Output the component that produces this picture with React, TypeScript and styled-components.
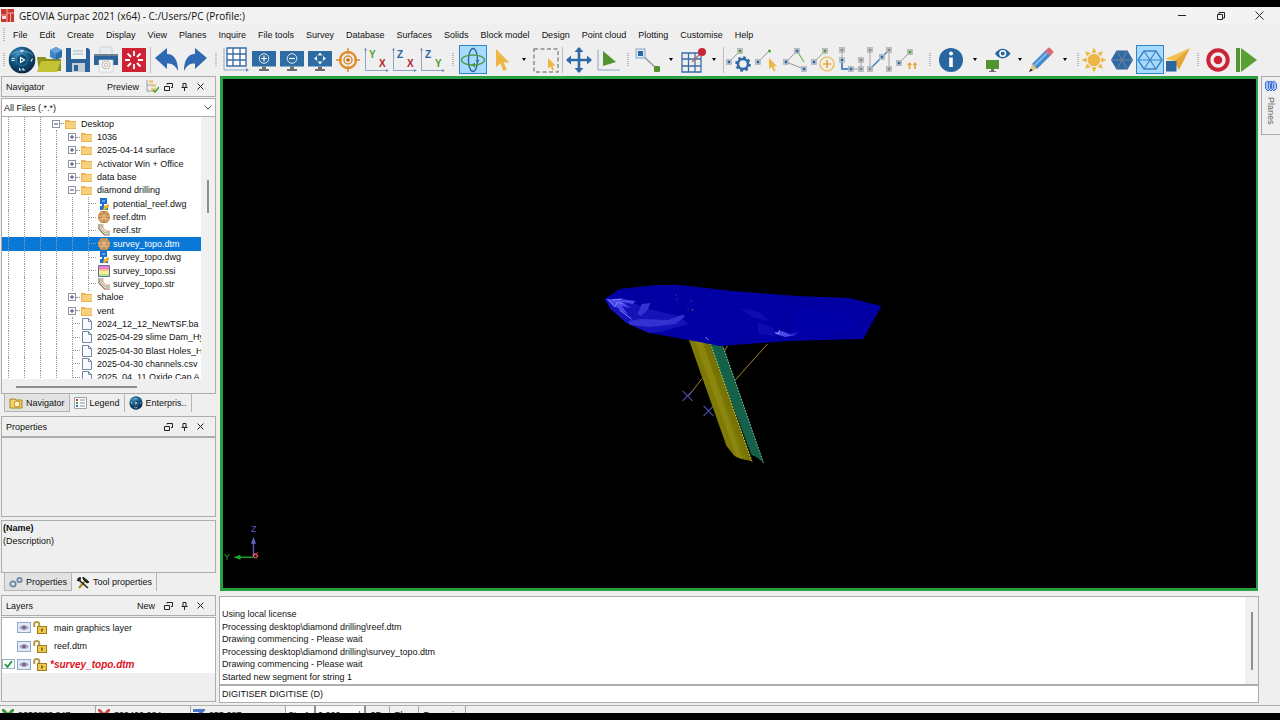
import React from "react";
import styled, { createGlobalStyle, css } from "styled-components";

const sans = `"Liberation Sans", Arial, sans-serif`;

const GlobalStyle = createGlobalStyle`
  *, *::before, *::after { box-sizing: border-box; }
  body { margin: 0; background: #000; font-family: ${sans}; font-size: 9px; color: #111; }
  button, input, select { font: inherit; color: inherit; margin: 0; padding: 0; border: 0; background: none; border-radius: 0; }
  ul { list-style: none; margin: 0; padding: 0; }
  svg { display: block; flex: none; }
`;

const Screen = styled.div`
  height: 100vh;
  padding: 7px 0;
  background: #000;
`;

const Window = styled.div`
  height: 100%;
  display: flex;
  flex-direction: column;
  background: #efefef;
  overflow: hidden;
`;

/* Title bar */
const TitleBar = styled.header`
  flex: none;
  height: 17px;
  display: flex;
  align-items: center;
  gap: 5px;
  padding-left: 1px;
  background: #f3f3f3;
`;
const Title = styled.h1`
  margin: 0;
  flex: 1;
  font: 400 10px "Open Sans", "Noto Sans", sans-serif;
`;
const WindowButton = styled.button`
  width: 39px;
  height: 17px;
  display: flex;
  align-items: center;
  justify-content: center;
`;
const WindowButtons = styled.div`
  display: flex;
  padding-right: 1px;
`;

/* Menu bar */
const MenuBar = styled.nav`
  flex: none;
  height: 21px;
  display: flex;
  align-items: center;
  gap: 12px;
  padding-left: 3px;
`;
const MenuItem = styled.button`
  white-space: nowrap;
`;
const Dots = styled.span`
  width: 2px;
  height: 13px;
  background: repeating-linear-gradient(#b9b9b9 0 1px, #efefef 1px 2px);
`;
const MenuGrip = styled(Dots)`
  margin-right: -4px;
`;

/* Toolbar */
const Toolbar = styled.div`
  flex: none;
  height: 31px;
  display: flex;
  align-items: flex-start;
`;
const Tool = styled.button<{ $active?: boolean }>`
  width: 28px;
  height: 29px;
  flex: none;
  display: flex;
  align-items: center;
  justify-content: center;
  ${(p) => p.$active && css`background: #a6dbff; box-shadow: inset 0 0 0 1px #2f86cc;`}
`;
const Grip = styled.span<{ $w: number }>`
  flex: none;
  width: ${(p) => p.$w}px;
  height: 29px;
  display: flex;
  align-items: center;
  justify-content: center;
`;
const Rule = styled.span`
  flex: none;
  width: 1px;
  height: 26px;
  margin: 2px;
  background: #bdbdbd;
`;
const Caret = styled.button<{ $w: number }>`
  flex: none;
  width: ${(p) => p.$w}px;
  height: 29px;
  display: flex;
  align-items: center;
  justify-content: center;
  &::after {
    content: "";
    border: 2px solid transparent;
    border-top: 3px solid #000;
    border-bottom: 0;
  }
`;

/* Main regions */
const Main = styled.main`
  flex: 1;
  min-height: 0;
  display: flex;
`;
const Side = styled.aside`
  flex: none;
  width: 216px;
  padding-left: 1px;
  display: flex;
  flex-direction: column;
`;
const Center = styled.section`
  flex: 1;
  min-width: 0;
  margin-left: 4px;
  display: flex;
  flex-direction: column;
`;
const Viewport = styled.div`
  flex: 1;
  min-height: 0;
  border: 3px solid #2aa043;
  border-width: 3px 2px 3px 3px;
  background: #000;
`;
const Strip = styled.aside`
  flex: none;
  width: 22px;
  padding-left: 3px;
`;
const PlanesTab = styled.button`
  width: 19px;
  height: 59px;
  border: 1px solid #a9a9a9;
  border-right: 0;
  display: flex;
  flex-direction: column;
  align-items: center;
  padding-top: 3px;
  gap: 5px;
  color: #666;
`;
const Vertical = styled.span`
  writing-mode: vertical-rl;
`;

/* Docked panels */
const PanelHead = styled.div`
  flex: none;
  height: 21px;
  display: flex;
  align-items: center;
  border: 1px solid #adadad;
  padding: 0 7px 0 4px;
`;
const PanelTitle = styled.h2`
  margin: 0;
  flex: 1;
  font-size: 9px;
  font-weight: 400;
`;
const HeadText = styled.button`
  margin-right: 5px;
`;
const HeadButton = styled.button`
  width: 16px;
  height: 16px;
  display: flex;
  align-items: center;
  justify-content: center;
`;
const ComboWrap = styled.div`
  flex: none;
  height: 19px;
  margin-top: 1px;
  display: flex;
  align-items: center;
  border: 1px solid #adadad;
  background: #fff;
  padding-right: 3px;
`;
const Combo = styled.select`
  appearance: none;
  flex: 1;
  padding-left: 2px;
  outline: 0;
`;
const Browser = styled.div`
  flex: none;
  height: 277px;
  border: 1px solid #adadad;
  border-top: 0;
  display: grid;
  grid-template-columns: 1fr 14px;
  grid-template-rows: 1fr 14px;
`;
const TreeClip = styled.div`
  min-width: 0;
  background: #fff;
  overflow: hidden;
`;
const Tree = styled.ul`
  height: 267px;
  display: grid;
  grid-auto-rows: 1fr;
`;
const TreeRow = styled.li<{ $on?: boolean }>`
  display: flex;
  align-items: stretch;
  min-height: 0;
  white-space: nowrap;
  ${(p) => p.$on && css`background: #0a78d7; color: #fff;`}
  & > :first-child { margin-left: 6px; }
`;
const Guide = styled.span`
  flex: none;
  width: 8px;
  margin-left: 8px;
  border-left: 1px dotted #999;
`;
const Elbow = styled(Guide)`
  display: flex;
  align-items: center;
  &::after { content: ""; flex: 1; border-top: 1px dotted #999; }
`;
const Knot = styled.span`
  flex: none;
  width: 12px;
  margin-left: 4px;
  display: flex;
  align-items: center;
  &::after { content: ""; flex: 1; border-top: 1px dotted #999; }
`;
const RowIcon = styled.span<{ $file?: boolean }>`
  flex: none;
  width: 17px;
  display: flex;
  align-items: center;
  padding-left: ${(p) => (p.$file ? 2 : 1)}px;
`;
const RowLabel = styled.span`
  align-self: center;
  line-height: 12px;
`;
const ScrollV = styled.div`
  display: flex;
  justify-content: center;
  background: #f0f0f0;
`;
const ThumbV = styled.span<{ $top: number; $len: number }>`
  width: 2px;
  height: ${(p) => p.$len}px;
  margin-top: ${(p) => p.$top}px;
  background: #8f8f8f;
`;
const ScrollH = styled.div`
  grid-column: 1 / -1;
  padding: 7px 0 0 14px;
`;
const ThumbH = styled.span`
  display: block;
  width: 121px;
  height: 2px;
  background: #8f8f8f;
`;
const Tabs = styled.div`
  flex: none;
  height: 18px;
  margin: 0 0 4px 3px;
  display: flex;
`;
const Tab = styled.button<{ $on?: boolean }>`
  display: flex;
  align-items: center;
  gap: 3px;
  padding: 0 4px 0 4px;
  white-space: nowrap;
  border-right: 1px solid #b5b5b5;
  ${(p) => p.$on && css`background: #e2e2e2; border: 1px solid #b5b5b5; border-top: 0;`}
`;
const Blank = styled.div`
  flex: none;
  height: 80px;
  margin-bottom: 3px;
  border: 1px solid #adadad;
`;
const Detail = styled.dl`
  flex: none;
  height: 53px;
  margin: 0;
  padding-top: 1px;
  border: 1px solid #adadad;
  line-height: 13px;
  dt { font-weight: 700; padding-left: 1px; }
  dd { margin: 0; padding-left: 1px; }
`;
const LayerBox = styled.div`
  flex: 1;
  min-height: 0;
  margin: 1px 0 3px;
  border: 1px solid #adadad;
`;
const LayerList = styled.ul`
  background: #fff;
`;
const LayerRow = styled.li<{ $on?: boolean }>`
  height: 18px;
  display: flex;
  align-items: center;
  gap: 2px;
  &:first-child { height: 19px; }
  ${(p) => p.$on && css`color: #e0101a; font-weight: 700; font-style: italic;`}
`;
const LayerCheck = styled.input`
  appearance: none;
  width: 13px;
  height: 10px;
  &:checked { border: 1px solid #9db4c8; background: #fff; }
`;
const LayerTick = styled.label`
  display: grid;
  & > * { grid-area: 1 / 1; align-self: center; justify-self: center; }
`;
const IconButton = styled.button`
  display: flex;
`;
const LayerName = styled.span<{ $on?: boolean }>`
  padding-left: ${(p) => (p.$on ? 1 : 5)}px;
  font-size: ${(p) => (p.$on ? 10 : 9)}px;
`;

/* Message window */
const Console = styled.div`
  flex: none;
  height: 107px;
  margin: 5px -1px 2px -1px;
  border: 1px solid #adadad;
  background: #fff;
  display: flex;
  flex-direction: column;
`;
const LogArea = styled.div`
  flex: 1;
  display: flex;
  border-bottom: 2px solid #adadad;
`;
const Log = styled.ul`
  flex: 1;
  height: 75px;
  margin-top: 11px;
  padding-left: 2px;
  display: grid;
  grid-auto-rows: 1fr;
  align-items: center;
`;
const LogScroll = styled(ScrollV)`
  width: 13px;
`;
const Prompt = styled.input`
  height: 16px;
  padding-left: 2px;
  outline: 0;
`;

/* Status bar */
const StatusBar = styled.footer`
  flex: none;
  height: 8px;
  overflow: hidden;
  display: flex;
  align-items: flex-start;
  border-top: 1px solid #adadad;
`;
const StatusCell = styled.span<{ $w: number; $sunk?: boolean }>`
  flex: none;
  width: ${(p) => p.$w}px;
  height: 18px;
  display: flex;
  align-items: center;
  gap: 4px;
  padding-left: 2px;
  white-space: nowrap;
  border-right: 1px solid #a5a5a5;
  ${(p) => p.$sunk && css`border-right: 2px solid #8a8a8a; background: #fafafa;`}
`;

/* ---------- icons ---------- */
const I = ({ children, s = 28 }: { children: React.ReactNode; s?: number }) => (
  <svg width={s} height={s} viewBox="0 0 28 28" fill="none" aria-hidden="true">{children}</svg>
);
const Node = ({ x, y, c = "#2e6ba6" }: { x: number; y: number; c?: string }) => (
  <g><rect x={x - 2.5} y={y - 2.5} width="5" height="5" fill="#c4ccd3" stroke="#a3a9ae" strokeWidth=".6" /><rect x={x - 1.3} y={y - 1.3} width="2.6" height="2.6" fill={c} /></g>
);
const Monitor = ({ children }: { children: React.ReactNode }) => (
  <I><rect x="2" y="5" width="24" height="15.5" fill="#2e6ca4" /><path d="M12 20.5h4v2.5h3v2H9v-2h3z" fill="#6b6f73" />{children}</I>
);
const Axes = ({ a, ac, b, bc }: { a: string; ac: string; b: string; bc: string }) => (
  <I>
    <path d="M3.5 3v21.500H25" stroke="#8ea6c4" strokeWidth="1" /><path d="M2 4.500l1.500-3L5 4.500zM24 23l3 1.500-3 1.500z" fill="#7090bb" />
    <text x="7" y="12" fontSize="10" fontWeight="700" fill={ac} fontFamily="Liberation Sans">{a}</text>
    <text x="17" y="21" fontSize="10" fontWeight="700" fill={bc} fontFamily="Liberation Sans">{b}</text>
  </I>
);
const Globe = ({ s = 28 }: { s?: number }) => (
  <I s={s}>
    <defs><radialGradient id="gl" cx=".4" cy=".3" r=".7"><stop offset="0" stopColor="#4d9ccc" /><stop offset=".5" stopColor="#12557f" /><stop offset="1" stopColor="#082744" /></radialGradient></defs>
    <circle cx="14" cy="14" r="13.3" fill="url(#gl)" />
    <path d="M3 9c5-5 17-5 22 0" stroke="#8cc8e8" strokeWidth="1" opacity=".6" />
    <circle cx="14" cy="14" r="5.500" fill="#0d4770" stroke="#2c7cae" strokeWidth=".8" />
    <path d="M12.500 11.500l4 2.500-4 2.500z" stroke="#fff" strokeWidth="1.200" />
    <path d="M3.500 12.500h3M3.500 14.500h3M23 15.500l1.500-3M12.500 4l1.500 1.500L15.500 4M11.500 22v2h2M15 22v2h2" stroke="#e4f2fa" strokeWidth="1.100" />
  </I>
);
const Cursor = "M0 0v17l4-3.600 3 7 3-1.300-3-6.600h5.500z";
const Hex = "M8 5h12l6 9-6 9H8L2 14z";
const cross = "M8 5l12 18M20 5L8 23M2 14h24";

const icons: Record<string, React.ReactNode> = {
  sphere: <Globe />,
  open: <I><path d="M1 11h8l2 2h14v12H3z" fill="#8f8f1d" /><path d="M5 15h20l-4 11H1z" fill="#c3c234" /><path d="M20 1l6 3v7l-6 3-6-3V4z" fill="#3f86c4" /><path d="M20 7.500v6.500l6-3V4z" fill="#2f6da7" /><path d="M14 4l6 3.500L26 4l-6-3z" fill="#66a4d8" /></I>,
  save: <I><path d="M2 2h22l2 2v22H2z" fill="#2b6399" /><path d="M7 2h15v11H7z" fill="#f1f4f6" /><path d="M9 5h10M9 8h10" stroke="#a8b1b8" /><path d="M8 17h13v9H8z" fill="#c5cdd4" /><path d="M10 19h4v6h-4z" fill="#2b6399" /></I>,
  print: <I><path d="M8 1h12v8H8z" fill="#e9edf0" stroke="#c0c6ca" strokeWidth=".7" /><path d="M2 8h24v11H2z" fill="#2b6399" /><path d="M2 8h24v2H2z" fill="#6f8191" /><path d="M7 14h14v12H7z" fill="#f4f5f5" stroke="#c9cdd0" strokeWidth=".7" /><circle cx="14" cy="19" r="4" stroke="#c2bbae" /><circle cx="14" cy="19" r="1.700" stroke="#cbb" /></I>,
  burst: <I><rect x="2" y="2" width="24" height="24" fill="#cf2134" /><path d="M14 5v5M14 18v5M5 14h5M18 14h5M7.500 7.500l3.500 3.500M17 17l3.500 3.500M20.500 7.500L17 11M11 17l-3.500 3.500" stroke="#fff" strokeWidth="1.800" /></I>,
  undo: <I><path d="M2 12L14 2v6c7 0 11 6 11 17-3-6-6-7.500-11-7.500V23z" fill="#2f69b1" /></I>,
  redo: <I><path d="M26 12L14 2v6C7 8 3 14 3 25c3-6 6-7.500 11-7.500V23z" fill="#2f69b1" /></I>,
  grid: <I><path d="M5 2h19v18H5zM11 2v18M18 2v18M5 8h19M5 14h19" stroke="#3a6ea5" strokeWidth="1.400" fill="#fff" /><path d="M2 2v22h23" stroke="#8ea6c4" /><path d="M24 22l3 2-3 2z" fill="#7090bb" /></I>,
  zoomIn: <Monitor><circle cx="14" cy="12.500" r="4.800" stroke="#dce9f4" /><path d="M11 12.500h6M14 9.500v6" stroke="#fff" strokeWidth="1.200" /></Monitor>,
  zoomOut: <Monitor><circle cx="14" cy="12.500" r="4.800" stroke="#dce9f4" /><path d="M11 12.500h6" stroke="#fff" strokeWidth="1.200" /></Monitor>,
  zoomAll: <Monitor><path d="M14 6.500l2.500 3h-5zM14 18.500l2.500-3h-5zM8 12.500l3-2.500v5zM20 12.500l-3-2.500v5z" fill="#e6f0f8" /></Monitor>,
  target: <I><circle cx="14" cy="14" r="8" stroke="#de8c2b" strokeWidth="2.300" /><circle cx="14" cy="14" r="4" stroke="#de8c2b" strokeWidth="1.500" /><circle cx="14" cy="14" r="1.800" fill="#c56c12" /><path d="M14 2v6M14 20v6M2 14h6M20 14h6" stroke="#de8c2b" strokeWidth="1.500" /></I>,
  yx: <Axes a="Y" ac="#4f9b2c" b="X" bc="#b6242c" />,
  zx: <Axes a="Z" ac="#2e64a4" b="X" bc="#b6242c" />,
  zy: <Axes a="Z" ac="#2e64a4" b="Y" bc="#4f9b2c" />,
  rotate: <I><ellipse cx="14" cy="14" rx="4.500" ry="11.500" stroke="#36679f" strokeWidth="1.400" /><ellipse cx="14" cy="14" rx="11.500" ry="5" stroke="#519a45" strokeWidth="1.400" /><path d="M16.500 14h4l-2 3z" fill="#36679f" /><path d="M16 16.500v5l-4-2.500z" fill="#519a45" /></I>,
  cursor: <I><path transform="translate(9 3) scale(1.080)" d={Cursor} fill="#eeb644" /></I>,
  select: <I><rect x="2" y="3" width="24" height="23" stroke="#8d8d8d" strokeWidth="1.500" strokeDasharray="4 2.500" /><path transform="translate(16 12) scale(.62)" d={Cursor} fill="#eeb644" /></I>,
  move: <I><path d="M14 2v24M2 14h24" stroke="#2e69a6" strokeWidth="2.600" /><path d="M14 1l4.500 5h-9zM14 27l4.500-5h-9zM1 14l5-4.500v9zM27 14l-5-4.500v9z" fill="#2e69a6" /></I>,
  tri: <I><path d="M5 4v20h22" stroke="#8ea6c4" /><path d="M10 5l13 11-13 4z" fill="#529430" /></I>,
  line: <I><path d="M7 8l15 14" stroke="#999" strokeWidth="1.500" /><rect x="2" y="3" width="9" height="9" fill="#dce8f2" stroke="#87a6c2" /><rect x="4" y="5" width="5" height="5" fill="#2e69a6" /><rect x="20" y="20" width="6" height="6" rx="1" fill="#529430" /></I>,
  gridpin: <I><path d="M3 7h19v19H3zM9.500 7v19M16 7v19M3 13h19M3 20h19" stroke="#3a6ea5" strokeWidth="1.300" /><path d="M13 16l8-8" stroke="#c4606a" strokeWidth="1.500" /><circle cx="23" cy="6" r="4" fill="#cb2437" /></I>,
  nGear: <I><path d="M3 16L14 5" stroke="#999" /><Node x={3} y={16} /><Node x={14} y={5} c="#529430" /><circle cx="17" cy="18" r="5" stroke="#2e69a6" strokeWidth="2.500" /><circle cx="17" cy="18" r="6.800" stroke="#2e69a6" strokeWidth="2" strokeDasharray="2.670 2.670" /></I>,
  nCursor: <I><path d="M4 16L15 5" stroke="#999" /><Node x={4} y={16} /><circle cx="15.500" cy="5" r="1.500" fill="#49a32f" /><path transform="translate(15 12) scale(.65)" d={Cursor} fill="#eeb644" /></I>,
  nTri: <I><path d="M22 23L4 16 15 5" stroke="#999" /><path d="M15 5l7 11" stroke="#71b35d" strokeWidth="1.200" /><Node x={4} y={16} /><Node x={15} y={5} /><Node x={22} y={23} /></I>,
  nPlus: <I><path d="M4 16L15 5" stroke="#999" /><Node x={4} y={16} /><Node x={15} y={5} c="#529430" /><circle cx="17" cy="18" r="7" stroke="#eeb644" strokeWidth="1.200" /><path d="M13 18h8M17 14v8" stroke="#e9a92c" strokeWidth="1.600" /></I>,
  nU: <I><path d="M4 4v19h19V14" stroke="#a3a3a3" /><path d="M4 13v10h9" stroke="#2e75bb" strokeWidth="1.500" /><Node x={4} y={4} c="#888" /><Node x={4} y={14} /><Node x={13} y={23} /><Node x={23} y={14} c="#888" /><Node x={23} y={23} c="#888" /></I>,
  nN: <I><path d="M4 4v19M23 4v19" stroke="#a3a3a3" /><path d="M4 23L23 4" stroke="#2e75bb" strokeWidth="1.300" /><Node x={4} y={4} c="#888" /><Node x={4} y={23} c="#888" /><Node x={16} y={11} /><Node x={23} y={4} c="#888" /><Node x={23} y={23} c="#888" /></I>,
  nUp: <I><path d="M5 17L16 6" stroke="#999" /><Node x={5} y={17} /><Node x={16} y={6} c="#529430" /><path d="M15.500 23v-5M21 23v-5" stroke="#e9a92c" strokeWidth="1.700" /><path d="M13 19l2.500-3 2.500 3zM18.500 19l2.500-3 2.500 3z" fill="#e9a92c" /></I>,
  info: <I><circle cx="14" cy="14" r="12" fill="#2b679f" /><circle cx="14" cy="7.500" r="2" fill="#fff" /><path d="M12.200 11.500h3.600V21h-3.600z" fill="#fff" /></I>,
  eye: <I><rect x="1" y="14" width="13" height="9" fill="#529430" /><path d="M6 23h3v2h2v1H4v-1h2z" fill="#6a7070" /><path d="M10 7.500c4-6.500 11-6.500 15.500 0-4.500 6.500-11.500 6.500-15.500 0z" fill="#2b679f" /><circle cx="17.700" cy="7.500" r="3.500" fill="#fff" /><circle cx="17.700" cy="7.500" r="2" fill="#2b679f" /></I>,
  pencil: <I><path d="M5 18L19 4l5 5L10 23z" fill="#4389cf" /><path d="M7 20L21 6" stroke="#86b8e6" strokeWidth="2" /><path d="M18 5l3-3q1-1 2 0l3 3q1 1 0 2l-3 3z" fill="#dc6a74" /><path d="M5 18l5 5-7 2.500z" fill="#e8c27c" /><path d="M3.700 22.500l2 2L2 26z" fill="#222" /></I>,
  sun: <I><path d="M14 1.500l2.500 5.200h-5zM14 26.500l2.500-5.200h-5zM1.500 14l5.200-2.500v5zM26.500 14l-5.200-2.500v5zM5.200 5.200l5.300 1.900-3.400 3.400zM22.800 22.800l-5.300-1.900 3.400-3.400zM22.800 5.200l-1.900 5.300-3.400-3.400zM5.200 22.800l1.900-5.300 3.400 3.400z" fill="#eeb644" /><circle cx="14" cy="14" r="7.200" fill="#efefef" /><circle cx="14" cy="14" r="6.300" fill="#eeb644" /></I>,
  hex: <I><path d="M8.500 4.500h11L25 14l-5.500 9.500h-11L3 14z" fill="#2e69a6" /><path d="M8.500 4.500l11 19M19.500 4.500l-11 19M3 14h22" stroke="#76889b" strokeWidth="1" /></I>,
  hexLine: <I><path d={Hex} stroke="#3d83bd" strokeWidth="1.400" /><path d={cross} stroke="#3d83bd" strokeWidth="1.200" /></I>,
  plane: <I><path d="M26 2L1 13l9 2z" fill="#f2c04c" /><path d="M26 2L10 15l5 9z" fill="#e5a632" /><rect x="2" y="15" width="10.500" height="10.500" fill="#2b679f" /></I>,
  stop: <I><circle cx="14" cy="14" r="9.700" stroke="#cb2437" strokeWidth="4" /><circle cx="14" cy="14" r="4.300" fill="#cb2437" /></I>,
  play: <I><path d="M4 2h4v24H4z" fill="#529430" /><path d="M9 2l16 12L9 26z" fill="#5a9e36" /></I>,
};

const FolderIcon = () => <svg width="11" height="10" viewBox="0 0 11 10"><path d="M0 1h4l1 1h6v8H0z" fill="#e9b451" /><path d="M1 3h10v6H1z" fill="#f8cf7c" /></svg>;
const Box = ({ plus }: { plus?: boolean }) => (
  <svg width="8" height="8" viewBox="0 0 8 8" fill="none"><rect x=".5" y=".5" width="7" height="7" fill="#fff" stroke="#8d93a0" /><path d={plus ? "M2 4h4M4 2v4" : "M2 4h4"} stroke="#3c466b" /></svg>
);
const fileIcons: Record<string, React.ReactNode> = {
  dwg: <svg width="12" height="12" viewBox="0 0 12 12"><path d="M2 0h7v6H6v2h4v4H2V8h2V6H2z" fill="#1f6fd2" /><path d="M6 8l5-2v3l-4 3H5z" fill="#e8b620" /><path d="M4 2h3v2H4z" fill="#5fa2ee" /></svg>,
  dtm: <svg width="12" height="12" viewBox="0 0 12 12" fill="none"><path d="M3 0h6l3 4v4l-3 4H3L0 8V4z" fill="#c48a4c" /><path d="M3 1l3 4 3-4M0 5l6 0 6 0M3 11l3-6 3 6M1 8h10" stroke="#edcb9c" strokeWidth=".8" /></svg>,
  str: <svg width="12" height="12" viewBox="0 0 12 12" fill="none"><path d="M1 0v5l5.500 6H12" stroke="#9a6b4d" strokeWidth="1.200" /><path d="M3 0v4.500L7.300 9H12" stroke="#5da05a" /><path d="M4.800 0v4L8 7.200h4" stroke="#d9806b" /></svg>,
  ssi: <svg width="12" height="12" viewBox="0 0 12 12"><path d="M.5.500h11v11H.5z" fill="#f7ef8f" stroke="#5c6f96" /><path d="M1 1h10v3H1z" fill="#ee7fcb" /><path d="M1 4h10v2H1z" fill="#f9b98a" /><path d="M1 9h10v2H1z" fill="#b4e58e" /></svg>,
  doc: <svg width="10" height="12" viewBox="0 0 10 12"><path d="M.5.500h6l3 3v8h-9z" fill="#f8fbff" stroke="#7587a3" /><path d="M6.500.500v3h3" fill="none" stroke="#7587a3" /></svg>,
};

const Eye = () => <svg width="14" height="11" viewBox="0 0 14 11"><rect x=".5" y=".5" width="13" height="10" fill="#e3eaf5" stroke="#93a8c8" /><path d="M2 5.500q5-5 10 0-5 5-10 0z" fill="#9aa5d0" /><circle cx="7" cy="5.500" r="1.800" fill="#8a5a78" /></svg>;
const Lock = () => <svg width="14" height="13" viewBox="0 0 14 13" fill="none"><path d="M1.200 6V3q0-2 2.500-2t2.500 2v3" stroke="#b9974a" strokeWidth="2" /><rect x="4.500" y="5.500" width="9" height="7" fill="#efc84d" stroke="#9f7b22" /><path d="M9 7.500v3" stroke="#5b4510" strokeWidth="1.400" /></svg>;
const Tick = () => <svg width="9" height="8" viewBox="0 0 9 8" fill="none"><path d="M1 4l2.500 3L8 1" stroke="#189b30" strokeWidth="1.800" /></svg>;

const HeadButtons = () => (
  <>
    <HeadButton aria-label="Float"><svg width="9" height="8" viewBox="0 0 9 8" fill="none" stroke="#222"><path d="M.5 3.500h5v4h-5zM3 1.500V.500h5.500v4H7" /></svg></HeadButton>
    <HeadButton aria-label="Pin"><svg width="7" height="8" viewBox="0 0 7 8" fill="none" stroke="#222"><path d="M2 4.500V.500h3v4M.5 4.500h6M3.500 5v3" /></svg></HeadButton>
    <HeadButton aria-label="Close"><svg width="7" height="7" viewBox="0 0 7 7" fill="none" stroke="#222"><path d="M.5.500l6 6M6.500.500l-6 6" /></svg></HeadButton>
  </>
);

const menus = ["File", "Edit", "Create", "Display", "View", "Planes", "Inquire", "File tools", "Survey", "Database", "Surfaces", "Solids", "Block model", "Design", "Point cloud", "Plotting", "Customise", "Help"];

type Part = string | ["grip" | "caret", number];
const parts: Part[] = [
  ["grip", 8], "sphere", "open", "save", "print", "burst", "|", "undo", "redo",
  ["grip", 13], "grid", "zoomIn", "zoomOut", "zoomAll", "target", "yx", "zx", "zy",
  ["grip", 13], "rotate", "cursor", ["caret", 17], "select", "|", "move", "tri",
  ["grip", 13], "line", ["caret", 17], "gridpin", ["caret", 14], "|",
  "nGear", "nCursor", "nTri", "nPlus", "nU", "nN", "nUp",
  ["grip", 15], "info", ["caret", 20], "eye", ["caret", 14], "pencil", ["caret", 20],
  ["grip", 5], "sun", "hex", "hexLine", "plane", ["grip", 12], "stop", "play",
];

type Row = { d: number; kind: "open" | "shut" | "file"; icon: string; t: string; on?: boolean };
const rows: Row[] = [
  { d: 3, kind: "open", icon: "folder", t: "Desktop" },
  { d: 4, kind: "shut", icon: "folder", t: "1036" },
  { d: 4, kind: "shut", icon: "folder", t: "2025-04-14 surface" },
  { d: 4, kind: "shut", icon: "folder", t: "Activator Win + Office" },
  { d: 4, kind: "shut", icon: "folder", t: "data base" },
  { d: 4, kind: "open", icon: "folder", t: "diamond drilling" },
  { d: 5, kind: "file", icon: "dwg", t: "potential_reef.dwg" },
  { d: 5, kind: "file", icon: "dtm", t: "reef.dtm" },
  { d: 5, kind: "file", icon: "str", t: "reef.str" },
  { d: 5, kind: "file", icon: "dtm", t: "survey_topo.dtm", on: true },
  { d: 5, kind: "file", icon: "dwg", t: "survey_topo.dwg" },
  { d: 5, kind: "file", icon: "ssi", t: "survey_topo.ssi" },
  { d: 5, kind: "file", icon: "str", t: "survey_topo.str" },
  { d: 4, kind: "shut", icon: "folder", t: "shaloe" },
  { d: 4, kind: "shut", icon: "folder", t: "vent" },
  { d: 4, kind: "file", icon: "doc", t: "2024_12_12_NewTSF.ba" },
  { d: 4, kind: "file", icon: "doc", t: "2025-04-29 slime Dam_Hy" },
  { d: 4, kind: "file", icon: "doc", t: "2025-04-30 Blast Holes_H" },
  { d: 4, kind: "file", icon: "doc", t: "2025-04-30 channels.csv" },
  { d: 4, kind: "file", icon: "doc", t: "2025_04_11 Oxide Cap A" },
];

const log = [
  "Using local license",
  "Processing desktop\\diamond drilling\\reef.dtm",
  "Drawing commencing - Please wait",
  "Processing desktop\\diamond drilling\\survey_topo.dtm",
  "Drawing commencing - Please wait",
  "Started new segment for string 1",
];

const layers = [
  { t: "main graphics layer" },
  { t: "reef.dtm" },
  { t: "*survey_topo.dtm", on: true },
];

const Scene = () => (
  <svg width="100%" height="100%" viewBox="223 79 1034 509" fill="none" role="img" aria-label="3D view">
    <path d="M768 344L735 381M728 346l-3 5M703 378l-14 18" stroke="#a0862c" />
    <path d="M683 391l10 10M693 391l-10 10M704 406l10 10M714 406l-10 10" stroke="#4c4cae" strokeWidth="1.200" />
    <path d="M689 339L711 344 752 461 742 459 735 456 727 446z" fill="#7f7a06" />
    <path d="M695 340l8 2 38 112 2 5-6-2z" fill="#8f8910" opacity=".8" />
    <path d="M703 342l8 2 41 116-5-1z" fill="#777204" />
    <path d="M710 344h13l41 119-7-6-5-2z" fill="#14604a" />
    <path d="M711 344l42 119" stroke="#e2dc58" strokeDasharray="1.500 1.500" />
    <path d="M724 348l40 115" stroke="#8cc6a6" strokeDasharray="1.500 1.500" />
    <path d="M605 299l15-10 37-4h23l53 6 64 5 53 2 32 8-18 33-74 2-43 3-27 2-20-4-50-9-23-10-17-15z" fill="#0200a2" />
    <path d="M606 299l17-1 22 10 34 8 10 8-28 8-12 1-22-10-16-14z" fill="#1413b8" />
    <path d="M606 299h14l16 2-3 3-10-2 8 6-9-2 7 9-11-7z" fill="#4a49e8" />
    <path d="M609 300l6 7 3-5 5 2M613 300l9-1M620 310l12 9" stroke="#8584ff" />
    <path d="M638 314l4-10 9-1-3 7-7 6zM629 321l12-2 28 1 13-5 4 1-10 8-26 3-20-2z" fill="#3332d0" />
    <path d="M772 329l3 4 7-2 8 3 8-2-2 3-10 2-10-3z" fill="#4a49e8" />
    <path d="M773 331l6 3 1-4M706 337l3 3" stroke="#8f8eff" />
    <path d="M740 308l20 4 10 9-18-4zM758 322l16 6 3 8-18-2z" fill="#0d0bb2" />
    <path d="M790 306l70 9-8 18-62 2z" fill="#0300ad" opacity=".6" />
    <path d="M676 295h1M677 299h1M691 301h1M688 309h1M692 310h2" stroke="#8f5560" />
    <path d="M253.500 557V541" stroke="#5353b5" strokeWidth="1.500" /><path d="M253.500 537l2.500 7h-5z" fill="#6666c8" />
    <path d="M253 557.500h-15" stroke="#1fa52c" strokeWidth="1.500" /><path d="M233.500 557.500l7-2.500v5z" fill="#1fa52c" />
    <circle cx="255.500" cy="556" r="2" stroke="#ff8080" /><path d="M254 553l4 4M258 552l-3 4" stroke="#e8323c" />
    <g fontFamily="Liberation Sans" fontSize="9"><text x="251" y="532" fill="#5c5cc0">Z</text><text x="224" y="560" fill="#1fa52c">Y</text></g>
  </svg>
);

export default function App() {
  return (
    <Screen>
      <GlobalStyle />
      <Window>
        <TitleBar>
          <svg width="13" height="13" viewBox="0 0 13 13"><path d="M0 0h13v13H0z" fill="#c9372c" /><path d="M6 0v13M0 6h6M6 4h7M9.500 4v9" stroke="#f0b0a5" /><path d="M1 7h4v3H1z" fill="#f7dcd6" /></svg>
          <Title>GEOVIA Surpac 2021 (x64) - C:/Users/PC (Profile:)</Title>
          <WindowButtons>
            <WindowButton aria-label="Minimise"><svg width="8" height="8" stroke="#222"><path d="M0 3.500h8" /></svg></WindowButton>
            <WindowButton aria-label="Restore"><svg width="8" height="8" viewBox="0 0 8 8" fill="none" stroke="#222"><path d="M.5 2.500h5v5h-5zM2 2V.500h5.500V6H6" /></svg></WindowButton>
            <WindowButton aria-label="Close"><svg width="9" height="9" viewBox="0 0 9 9" stroke="#222"><path d="M.5.500l8 8M8.500.500l-8 8" /></svg></WindowButton>
          </WindowButtons>
        </TitleBar>

        <MenuBar>
          <MenuGrip />
          {menus.map((m) => <MenuItem key={m}>{m}</MenuItem>)}
        </MenuBar>

        <Toolbar role="toolbar">
          {parts.map((p, i) => {
            if (p === "|") return <Rule key={i} />;
            if (typeof p === "string")
              return <Tool key={i} aria-label={p} $active={p === "rotate" || p === "hexLine"}>{icons[p]}</Tool>;
            return p[0] === "grip"
              ? <Grip key={i} $w={p[1]}><Dots /></Grip>
              : <Caret key={i} $w={p[1]} aria-label="More" />;
          })}
        </Toolbar>

        <Main>
          <Side>
            <PanelHead>
              <PanelTitle>Navigator</PanelTitle>
              <HeadText>Preview</HeadText>
              <HeadButton aria-label="Tree options"><svg width="13" height="13" viewBox="0 0 13 13" fill="none"><path d="M1 0v11h5M1 5h4" stroke="#999" /><path d="M3 0h4v3H3zM5 4h5v3H5zM5 8h5v4H5z" fill="#efc98a" /><path d="M7 10l2 2 4-5" stroke="#3aa53a" strokeWidth="1.500" /></svg></HeadButton>
              <HeadButtons />
            </PanelHead>
            <ComboWrap>
              <Combo aria-label="File filter"><option>All Files (.*.*)</option></Combo>
              <svg width="8" height="5" viewBox="0 0 8 5" fill="none"><path d="M.5.500L4 4 7.500.500" stroke="#555" /></svg>
            </ComboWrap>
            <Browser>
              <TreeClip>
                <Tree role="tree">
                  {rows.map((r, i) => (
                    <TreeRow key={i} role="treeitem" $on={r.on}>
                      {Array.from({ length: r.d }, (_, k) => <Guide key={k} />)}
                      {r.kind === "file" ? <Elbow /> : <Knot><Box plus={r.kind === "shut"} /></Knot>}
                      <RowIcon $file={r.icon !== "folder"}>{r.icon === "folder" ? <FolderIcon /> : fileIcons[r.icon]}</RowIcon>
                      <RowLabel>{r.t}</RowLabel>
                    </TreeRow>
                  ))}
                </Tree>
              </TreeClip>
              <ScrollV><ThumbV $top={63} $len={33} /></ScrollV>
              <ScrollH><ThumbH /></ScrollH>
            </Browser>
            <Tabs>
              <Tab $on>
                <svg width="14" height="12" viewBox="0 0 14 12"><path d="M1 2h5l1 1h6v8H1z" fill="#f3d36b" stroke="#a88425" /><circle cx="8" cy="7" r="3" fill="#fff3c4" stroke="#b58d2c" /></svg>
                Navigator
              </Tab>
              <Tab>
                <svg width="13" height="12" viewBox="0 0 13 12"><path d="M.5.500h12v11H.5z" fill="#fff" stroke="#96a4b8" /><path d="M2 2h2v2H2z" fill="#d33" /><path d="M2 5h2v2H2z" fill="#3a3" /><path d="M2 8h2v2H2z" fill="#36c" /><path d="M6 3h5M6 6h5M6 9h5" stroke="#888" /></svg>
                Legend
              </Tab>
              <Tab><Globe s={14} />Enterpris..</Tab>
            </Tabs>

            <PanelHead><PanelTitle>Properties</PanelTitle><HeadButtons /></PanelHead>
            <Blank />
            <Detail><dt>(Name)</dt><dd>(Description)</dd></Detail>
            <Tabs>
              <Tab $on>
                <svg width="14" height="12" viewBox="0 0 14 12" fill="none" stroke="#6e87a5" strokeWidth="1.800"><circle cx="4" cy="8" r="2.700" /><circle cx="10.500" cy="4" r="2.200" /></svg>
                Properties
              </Tab>
              <Tab>
                <svg width="14" height="13" viewBox="0 0 14 13" fill="none"><path d="M3 12l7-8" stroke="#a08a20" strokeWidth="2" /><path d="M7 1l6 5-2 1-4-4z" fill="#222" stroke="#222" /><path d="M2 2l2 3 8 7M1 4l3 1V1" stroke="#222" strokeWidth="1.600" /></svg>
                Tool properties
              </Tab>
            </Tabs>

            <PanelHead><PanelTitle>Layers</PanelTitle><HeadText>New</HeadText><HeadButtons /></PanelHead>
            <LayerBox>
              <LayerList>
                {layers.map((l) => (
                  <LayerRow key={l.t} $on={l.on}>
                    <LayerTick><LayerCheck type="checkbox" aria-label={"Active " + l.t} defaultChecked={l.on} />{l.on && <Tick />}</LayerTick>
                    <IconButton aria-label="Visible"><Eye /></IconButton>
                    <IconButton aria-label="Lock"><Lock /></IconButton>
                    <LayerName $on={l.on}>{l.t}</LayerName>
                  </LayerRow>
                ))}
              </LayerList>
            </LayerBox>
          </Side>

          <Center>
            <Viewport><Scene /></Viewport>
            <Console>
              <LogArea>
                <Log>{log.map((l, i) => <li key={i}>{l}</li>)}</Log>
                <LogScroll><ThumbV $top={15} $len={58} /></LogScroll>
              </LogArea>
              <Prompt aria-label="Command" defaultValue="DIGITISER DIGITISE (D)" />
            </Console>
          </Center>

          <Strip>
            <PlanesTab>
              <svg width="12" height="12" viewBox="0 0 12 12" fill="#a9c2f2" stroke="#3f6fd8"><path d="M6.500 2.500L9 1l2.500 2.500v5L9 11 6.500 8.500zM3.500 2.500L6 1l2.500 2.500v5L6 11 3.500 8.500zM.5 2.500L3 1l2.500 2.500v5L3 11 .5 8.500z" /></svg>
              <Vertical>Planes</Vertical>
            </PlanesTab>
          </Strip>
        </Main>

        <StatusBar>
          <StatusCell $w={96}><svg width="12" height="12" viewBox="0 0 12 12" fill="none"><path d="M0 0l6 6 6-6M6 6v6" stroke="#3d9b35" strokeWidth="3" /></svg>9050883.947</StatusCell>
          <StatusCell $w={95}><svg width="12" height="12" viewBox="0 0 12 12"><path d="M0 0l12 12M12 0L0 12" stroke="#cc4a40" strokeWidth="3" /></svg>399400.904</StatusCell>
          <StatusCell $w={95}><svg width="12" height="12" viewBox="0 0 12 12" fill="none"><path d="M0 1.500h10L1 10.500h11" stroke="#4877c4" strokeWidth="3" /></svg>955.087</StatusCell>
          <StatusCell $w={30} $sunk>Str: 1</StatusCell>
          <StatusCell $w={50} $sunk>0.000 mod</StatusCell>
          <StatusCell $w={24}>&nbsp;3D</StatusCell>
          <StatusCell $w={29}>&nbsp;Plan</StatusCell>
          <StatusCell $w={47}>&nbsp;Dynamic</StatusCell>
        </StatusBar>
      </Window>
    </Screen>
  );
}
